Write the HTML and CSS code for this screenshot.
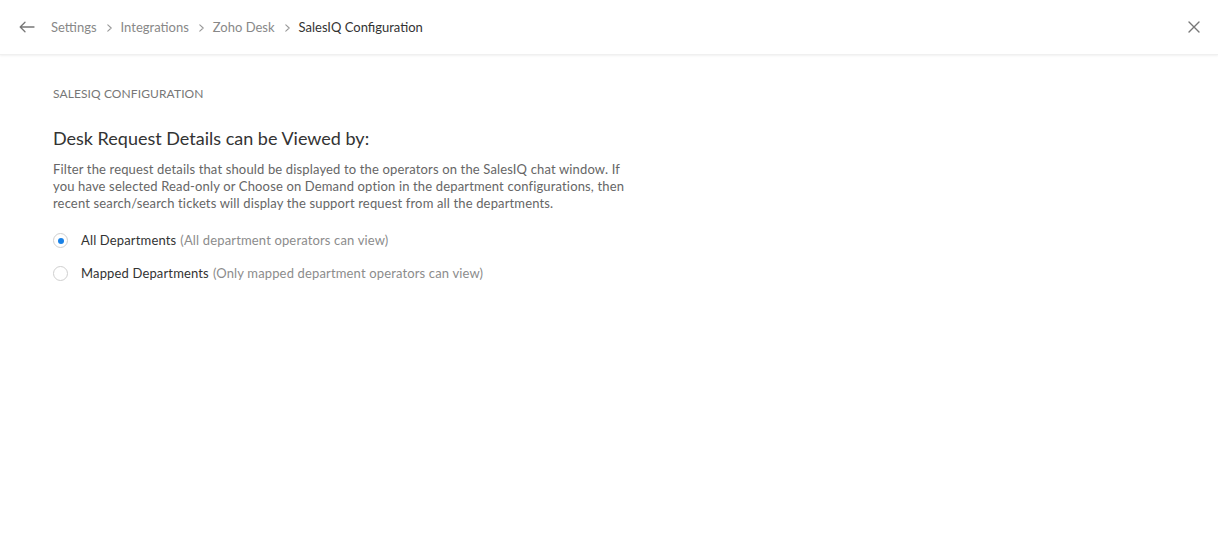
FILE: index.html
```html
<!DOCTYPE html>
<html lang="en">
<head>
<meta charset="utf-8">
<title>SalesIQ Configuration</title>
<link rel="stylesheet" href="styles.css">
</head>
<body>
<header class="topbar">
  <nav class="crumbs">
    <svg class="back" width="16" height="12" viewBox="0 0 16 12" fill="none" stroke="#777" stroke-width="1.3" stroke-linecap="round" stroke-linejoin="round"><path d="M15 6H1.5M6 1.2L1.2 6L6 10.8"/></svg>
    <span class="crumb">Settings</span>
    <svg class="sep" width="5" height="8" viewBox="0 0 5 8" fill="none" stroke="#999" stroke-width="1.1" stroke-linecap="round" stroke-linejoin="round"><path d="M0.8 0.8L4.2 4L0.8 7.2"/></svg>
    <span class="crumb">Integrations</span>
    <svg class="sep" width="5" height="8" viewBox="0 0 5 8" fill="none" stroke="#999" stroke-width="1.1" stroke-linecap="round" stroke-linejoin="round"><path d="M0.8 0.8L4.2 4L0.8 7.2"/></svg>
    <span class="crumb">Zoho Desk</span>
    <svg class="sep" width="5" height="8" viewBox="0 0 5 8" fill="none" stroke="#999" stroke-width="1.1" stroke-linecap="round" stroke-linejoin="round"><path d="M0.8 0.8L4.2 4L0.8 7.2"/></svg>
    <span class="crumb current">SalesIQ Configuration</span>
  </nav>
  <svg class="close" width="12" height="12" viewBox="0 0 12 12" stroke="#777" stroke-width="1.4" stroke-linecap="round"><path d="M1 1L11 11M11 1L1 11"/></svg>
</header>
<main class="content">
  <div class="section-title">SALESIQ CONFIGURATION</div>
  <h2 class="heading">Desk Request Details can be Viewed by:</h2>
  <p class="desc">Filter the request details that should be displayed to the operators on the SalesIQ chat window. If you have selected Read-only or Choose on Demand option in the department configurations, then recent search/search tickets will display the support request from all the departments.</p>
  <div class="options">
    <label class="option"><span class="radio checked"></span><span class="label">All Departments</span> <span class="hint">(All department operators can view)</span></label>
    <label class="option"><span class="radio"></span><span class="label">Mapped Departments</span> <span class="hint">(Only mapped department operators can view)</span></label>
  </div>
</main>
</body>
</html>
```
FILE: styles.css
```css
* { box-sizing: border-box; }
html, body { margin: 0; padding: 0; background: #fff; }
body { font-family: Lato, "Open Sans", sans-serif; color: #333; }

.topbar {
  height: 55px;
  display: flex;
  align-items: center;
  justify-content: space-between;
  padding: 0 18px 0 19px;
  box-shadow: 0 1px 2px rgba(0,0,0,0.06);
  border-bottom: 1px solid #f0f0f0;
}
.crumbs { display: flex; align-items: center; font-size: 13px; }
.back { margin-right: 16px; }
.crumb { color: #888; }
.crumb.current { color: #333; }
.sep { margin: 1px 9px 0 10px; display: block; }
.close { display: block; }

.content { padding: 31px 53px; }
.section-title { font-size: 12px; color: #777; letter-spacing: 0.1px; line-height: 15px; }
.heading { font-size: 18px; font-weight: 400; color: #333; margin: 26px 0 0; line-height: 22px; }
.desc { font-size: 13px; color: #666; line-height: 17px; margin: 12px 0 0; width: 585px; letter-spacing: 0.15px; }
.options { margin-top: 19px; display: flex; flex-direction: column; gap: 14px; }
.option { display: flex; align-items: center; font-size: 13px; line-height: 19px; cursor: pointer; letter-spacing: 0.15px; }
.radio {
  width: 15px; height: 15px; border-radius: 50%;
  border: 1px solid #cfcfcf; margin-right: 13px; position: relative; flex: none;
}
.radio.checked::after {
  content: ""; position: absolute; left: 3.5px; top: 3.5px;
  width: 6px; height: 6px; border-radius: 50%; background: #1a82e6;
}
.label { color: #333; }
.hint { color: #8c8c8c; margin-left: 4px; }
```
